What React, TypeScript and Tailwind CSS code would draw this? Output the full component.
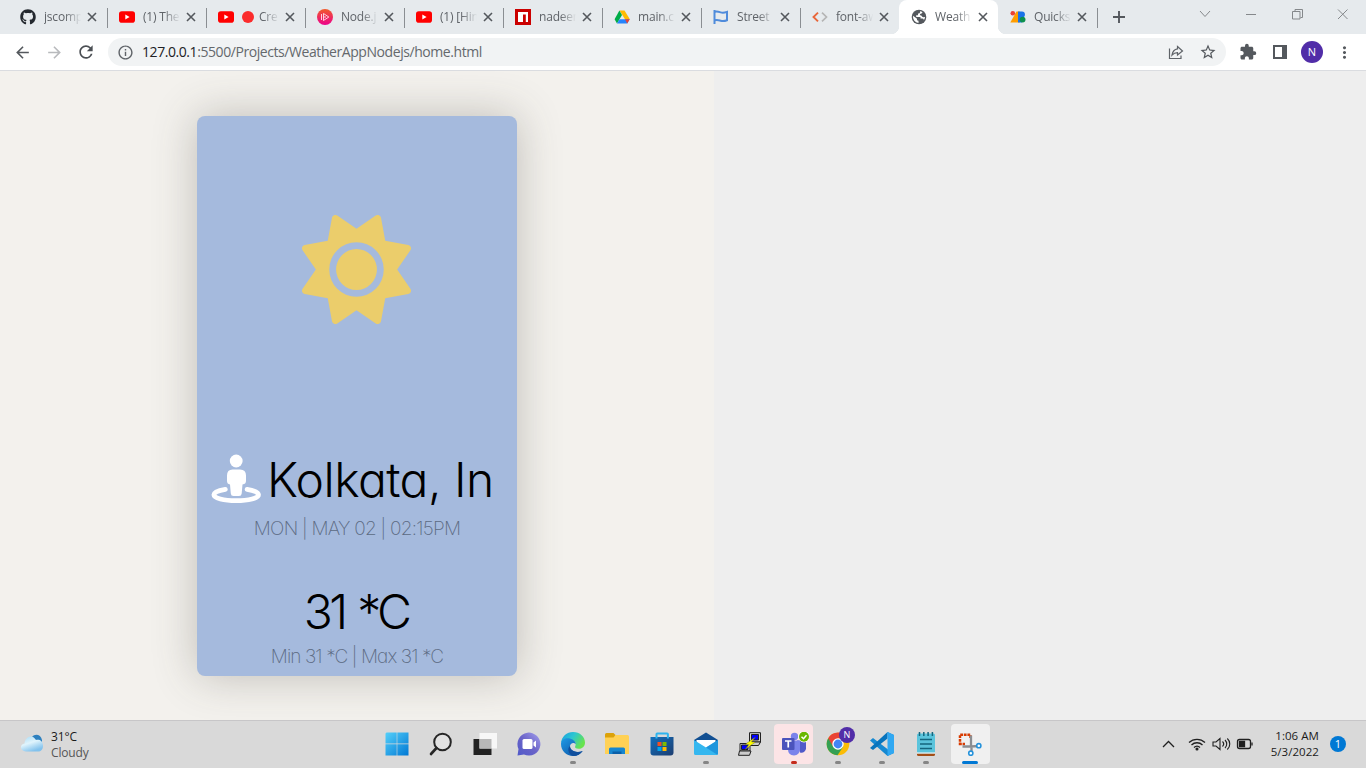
import type { ReactNode } from "react";
import { FaGithub, FaSun } from "react-icons/fa6";
import {
  MdArrowBack,
  MdArrowForward,
  MdRefresh,
  MdInfoOutline,
  MdExtension,
  MdStarBorder,
  MdMoreVert,
} from "react-icons/md";

const YouTube = () => (
  <svg viewBox="0 0 16 16" className="size-4">
    <rect y="2.3" width="16" height="11.4" rx="2.8" fill="#f00" />
    <path d="M6.3 5.6v4.8L10.6 8z" fill="#fff" />
  </svg>
);

const PlayBadge = () => (
  <svg viewBox="0 0 16 16" className="size-4">
    <defs>
      <linearGradient id="pb" x1="0" y1="0" x2="0" y2="1">
        <stop offset="0" stopColor="#f15b2a" />
        <stop offset="1" stopColor="#ec008c" />
      </linearGradient>
    </defs>
    <circle cx="8" cy="8" r="8" fill="url(#pb)" />
    <path d="M4.500 5v6M6.500 4.500v7L11.800 8zM6.500 8h2.500" fill="none" stroke="#ffe3ee" strokeWidth=".9" />
  </svg>
);

const Npm = () => (
  <svg viewBox="0 0 16 16" className="size-4">
    <rect width="16" height="16" fill="#cb0000" />
    <path d="M3 3h10v10h-2.2V5.4H8V13H3z" fill="#fff" />
  </svg>
);

const Drive = () => (
  <svg viewBox="0 0 16 16" className="size-4">
    <path d="M5.5 1.6h5L16 10.4h-4.9z" fill="#ffba00" />
    <path d="M5.4 1.6 8 6 3 14.4.6 10.2z" fill="#00ac47" />
    <path d="M5.6 10.2H15.6L13.2 14.4H3z" fill="#2684fc" />
    <path d="M11 10.2h4.7l-2.5 4.2z" fill="#ea4335" />
  </svg>
);

const Flag = () => (
  <svg viewBox="0 0 16 16" className="size-4">
    <path
      d="M1.500 1v14M2 2.800c2.400-.7 4 .1 5.700.6 2 .6 4 .3 6.300-.5v8.300c-2.300.9-4.200 1.100-6.300.5-1.800-.5-3.400-1.200-5.700-.5"
      fill="none"
      stroke="#4f8bdb"
      strokeWidth="2"
    />
  </svg>
);

const Brackets = () => (
  <svg viewBox="0 0 16 16" className="size-4">
    <path d="M6 3.600 1.500 8 6 12.400" fill="none" stroke="#e8663a" strokeWidth="1.900" />
    <path d="m10 3.600 4.500 4.400-4.500 4.400" fill="none" stroke="#b5b5b5" strokeWidth="1.700" />
  </svg>
);

const Globe = () => (
  <svg viewBox="0 0 16 16" className="size-4">
    <circle cx="8" cy="8" r="7.300" fill="#54585d" />
    <path d="M9 2.200c.3 1.500-.4 2.300-2 2.300v1.700H5.200v1.800h4.300v1.500h1.800c1.200 0 1.700.9 1.400 1.900A6 6 0 0 0 14 8c-1.500.3-2.600.2-3-.6-.5-1-1.400-.5-1.900-1.300-.4-.8.300-1.500 1.300-1.600.9-.1 1-.8.900-1.500A6 6 0 0 0 9 2.200z" fill="#fff" />
    <path d="M2.100 6.800 6 9.700v1.500l1.500.5v2.300A6 6 0 0 1 2.100 6.800z" fill="#fff" />
  </svg>
);

const GoogleFonts = () => (
  <svg viewBox="0 0 16 16" className="size-4">
    <path d="M6.500 2.500h3.200v11H.3z" fill="#ff9d00" />
    <path d="M8 2.500h4a2.900 2.900 0 0 1 0 5.900v5H8z" fill="#1a73e8" />
    <circle cx="2.800" cy="4.300" r="2.300" fill="#ea4335" />
    <circle cx="12.600" cy="10.600" r="2.900" fill="#0d904f" />
  </svg>
);

const Close = () => (
  <svg viewBox="0 0 14 14" className="ml-[3px] size-[14px] shrink-0">
    <path d="m3 3 8 8m0-8-8 8" stroke="#54585d" strokeWidth="1.600" />
  </svg>
);

const StreetView = () => (
  <svg viewBox="5 5 50 50" className="mt-[-3px] size-[50px] shrink-0" fill="#fff">
    <circle cx="30.200" cy="12" r="6.400" />
    <path d="M26.500 20.500h7.500q6 0 6 6v5.500q0 3-3.500 3.500l-.8 9q-.2 2.500-2.700 2.500h-5.500q-2.500 0-2.700-2.500l-.8-9Q21 35 21 32v-5.500q0-6 5.500-6z" />
    <path
      d="M19.300 40.300C12 41.400 7.900 43.400 7.900 45.800c0 3.400 9.800 5.900 22.300 5.900s22.300-2.500 22.300-5.900c0-2.400-4.100-4.400-11.400-5.500"
      fill="none"
      stroke="#fff"
      strokeWidth="4.800"
      strokeLinecap="round"
    />
  </svg>
);

type TabInfo = { icon: ReactNode; title: string; dot?: boolean; active?: boolean; last?: boolean };

const tabs: TabInfo[] = [
  { icon: <FaGithub className="size-4 text-[#24292f]" />, title: "jscomp" },
  { icon: <YouTube />, title: "(1) The" },
  { icon: <YouTube />, title: "Cre", dot: true },
  { icon: <PlayBadge />, title: "Node.j" },
  { icon: <YouTube />, title: "(1) [Hin" },
  { icon: <Npm />, title: "nadeer" },
  { icon: <Drive />, title: "main.c" },
  { icon: <Flag />, title: "Street" },
  { icon: <Brackets />, title: "font-aw", last: true },
  { icon: <Globe />, title: "Weath", active: true },
  { icon: <GoogleFonts />, title: "Quicks" },
];

function Tab({ icon, title, dot, active, last }: TabInfo) {
  return (
    <div
      className={
        "relative flex h-[34px] w-[99px] shrink-0 items-center pl-3 " + (active ? "rounded-t-lg bg-white" : "")
      }
    >
      {icon}
      <div className="ml-2 flex w-[38px] items-center whitespace-nowrap text-[12px] tracking-[-0.2px] text-[#5f6368] [mask-image:linear-gradient(90deg,#000_55%,transparent_98%)]">
        {dot && <span className="mr-[5px] size-3 shrink-0 rounded-full bg-[#fb2c2c]" />}
        {title}
      </div>
      <Close />
      {!active && !last && <span className="absolute -right-px top-2 h-5 w-px bg-[#8a8e92]" />}
      {active && (
        <>
          <span className="absolute -left-2 bottom-0 size-2 bg-[radial-gradient(circle_at_0_0,transparent_8px,white_8.5px)]" />
          <span className="absolute -right-2 bottom-0 size-2 bg-[radial-gradient(circle_at_100%_0,transparent_8px,white_8.5px)]" />
        </>
      )}
    </div>
  );
}

function Browser() {
  return (
    <header className="h-[71px] shrink-0">
      <div className="flex h-[34px] bg-[#e6eaed] pl-2">
        {tabs.map((t, i) => (
          <Tab key={i} {...t} />
        ))}
        <svg viewBox="0 0 18 18" className="ml-[13px] mt-2 size-[18px]">
          <path d="M9 3v12M3 9h12" stroke="#54585d" strokeWidth="1.900" />
        </svg>
        <svg viewBox="0 0 160 34" className="ml-auto mr-[14px] h-[34px] w-[160px]" fill="none" stroke="#85888b" strokeWidth="1">
          <path d="m8 11 5 5.500 5-5.500M54 14.500h10M100.500 11.500h7.500v7.500h-7.500zM103 11V9.500h7.500v8h-2M146 9.500l9.500 9.500m0-9.500-9.500 9.500" />
        </svg>
      </div>
      <div className="flex h-[37px] items-center border-b border-[#dadce0] bg-white pl-[13px]">
        <MdArrowBack className="size-[19px] text-[#54585d]" />
        <MdArrowForward className="ml-[13px] size-[19px] text-[#b8babd]" />
        <MdRefresh className="ml-3 size-5 text-[#4b4f54]" />
        <div className="ml-3 flex h-7 w-[1118px] items-center rounded-full bg-[#f1f3f4] pl-[9px] pr-[9px]">
          <MdInfoOutline className="size-[17px] text-[#5f6368]" />
          <span className="ml-2 mt-[-1px] text-[14px] tracking-[-0.43px] text-[#64686c]">
            <span className="text-[#202124]">127.0.0.1</span>:5500/Projects/WeatherAppNodejs/home.html
          </span>
          <svg viewBox="0 0 16 16" className="ml-auto size-4" fill="none" stroke="#5f6368" strokeWidth="1.200">
            <path d="M1.500 4.500v10h11.500v-3M9.500 2.500 14.500 7l-5 4V8.700c-2.300 0-3.800.6-5.500 2.400.5-3 2.200-5.700 5.500-6.200z" />
          </svg>
          <MdStarBorder className="ml-[15px] size-[18px] text-[#54585d]" />
        </div>
        <MdExtension className="ml-[13px] size-[18px] text-[#54585d]" />
        <svg viewBox="0 0 16 16" className="ml-[15px] size-4" fill="#54585d">
          <path fillRule="evenodd" d="M1 1h14v14H1zM3 3v10h7V3z" />
        </svg>
        <span className="ml-[13px] flex size-[22px] items-center justify-center rounded-full bg-[#512da8] text-[11px] text-white">N</span>
        <MdMoreVert className="ml-3 size-[19px] text-[#54585d]" />
      </div>
    </header>
  );
}

function WeatherCard() {
  return (
    <article className="flex h-[560px] w-80 flex-col items-center rounded-lg bg-[#a5badd] shadow-[0_0_44px_rgba(70,65,55,0.3)] [font-family:Inter,'Open_Sans',sans-serif] [font-feature-settings:'cv11']">
      <FaSun className="mb-px mr-px mt-[99px] size-[109px] text-[#ebcd6b]" />
      <div className="mt-[125px] flex h-[60px] w-full items-center pl-[14px]">
        <StreetView />
        <h1 className="ml-[6px] whitespace-nowrap text-[48px] font-[330] leading-[60px] tracking-[-0.55px] text-black">Kolkata, In</h1>
      </div>
      <p className="mt-[7px] whitespace-nowrap text-[19px] font-extralight leading-6 tracking-[-0.75px] text-[#5c6a82]">
        MON | MAY 02 | 02:15PM
      </p>
      <p className="mt-[41px] whitespace-nowrap pr-[2px] text-[48px] font-[330] leading-[60px] tracking-[-3.7px] text-black [word-spacing:3px]">31 *C</p>
      <p className="mt-[3px] whitespace-nowrap text-[19px] font-extralight leading-6 tracking-[-0.9px] text-[#5c6a82]">
        Min 31 *C | Max 31 *C
      </p>
    </article>
  );
}

const Icon = ({ children }: { children: ReactNode }) => (
  <svg viewBox="0 0 24 24" className="size-6">
    {children}
  </svg>
);

const apps: { icon: ReactNode; mark?: string; tile?: string }[] = [
  {
    icon: (
      <Icon>
        <defs>
          <linearGradient id="win" x1="0" y1="0" x2="1" y2="1">
            <stop stopColor="#55d0fa" />
            <stop offset="1" stopColor="#0078d4" />
          </linearGradient>
        </defs>
        <path fill="url(#win)" d="M1.500.5H11.700v11H.5v-10zM12.300.5h11.200v11H12.300zM.5 12.200H11.700v11.300H.5zM12.300 12.200h11.200v11.300H12.300z" />
      </Icon>
    ),
  },
  {
    icon: (
      <Icon>
        <circle cx="13.500" cy="10" r="8.300" fill="#e2e2e2" stroke="#262626" strokeWidth="2" />
        <path d="m7.500 16-5.500 6" stroke="#262626" strokeWidth="2.600" strokeLinecap="round" />
      </Icon>
    ),
  },
  {
    icon: (
      <Icon>
        <path d="M.5 7h18v16H.5z" fill="#222" />
        <path d="M6.500 1h18v15.500h-18z" fill="#f7f7f7" />
        <path d="M6.500 7h12v9.500h-12z" fill="#b8b8b8" />
      </Icon>
    ),
  },
  {
    icon: (
      <Icon>
        <defs>
          <linearGradient id="chat" x1="0" y1="1" x2="1" y2="0">
            <stop stopColor="#5059c9" />
            <stop offset=".5" stopColor="#6b64c8" />
            <stop offset="1" stopColor="#a5a1ee" />
          </linearGradient>
        </defs>
        <path d="M.5 23.500 1.500 17A11.500 11.500 0 1 1 7 22.500z" fill="url(#chat)" />
        <rect x="5.500" y="7" width="10" height="10" rx="1.500" fill="#fff" />
        <path d="m16.500 10.500 2.500-2v7l-2.500-2z" fill="#fff" />
      </Icon>
    ),
  },
  {
    icon: (
      <Icon>
        <defs>
          <linearGradient id="edgea" x1="0" y1="0" x2="1" y2=".5">
            <stop stopColor="#199ce0" />
            <stop offset=".5" stopColor="#2cc6d2" />
            <stop offset="1" stopColor="#67e34d" />
          </linearGradient>
          <linearGradient id="edgeb" x1="0" y1="0" x2="1" y2="1">
            <stop stopColor="#1f9be6" />
            <stop offset="1" stopColor="#0b4c9f" />
          </linearGradient>
        </defs>
        <path d="M0 11C.6 4.500 5.800 0 12 0c7 0 12 5 12 10.500 0 4-3 6.300-6.300 6.300-3 0-4.300-1.300-3.400-2.700 1.500-2.600-.8-5.900-4.300-6C5 8 1 9 0 11z" fill="url(#edgea)" />
        <path d="M0 12c0-4 3.500-6.300 7.500-5.700 4 .4 7.200 2.700 7.200 6-2-2.500-5.700-1-5.700 2.200 0 4.500 7 7 12.700 4.500C19.600 22 16 24 12 24 5.400 24 0 18.700 0 12z" fill="url(#edgeb)" />
        <path d="M9 14c0 5 7 7.500 12.700 5C19.600 22 16 24 12.500 24 8 23.300 5.500 17 9 14z" fill="#104f9d" />
      </Icon>
    ),
    mark: "w-1.5 bg-[#858585]",
  },
  {
    icon: (
      <Icon>
        <path d="M0 2.500A1.500 1.500 0 0 1 1.500 1h7l2 2v3H0z" fill="#dca20a" />
        <path d="M0 5.500h8.500l2-2.500H22.500q1.500 0 1.500 1.500v17.500H0z" fill="#ffd155" />
        <path d="M4 22v-5q0-1.500 1.500-1.500h13q1.500 0 1.500 1.500v5z" fill="#1686cf" />
        <path d="M7.500 19.500h9V22h-9z" fill="#0b5fa8" />
      </Icon>
    ),
  },
  {
    icon: (
      <Icon>
        <defs>
          <linearGradient id="store" x1="0" y1="0" x2="1" y2="1">
            <stop stopColor="#1270bd" />
            <stop offset="1" stopColor="#1d3d70" />
          </linearGradient>
        </defs>
        <path d="M.5 5h23v15.500q0 3-3 3h-17q-3 0-3-3z" fill="url(#store)" />
        <path d="M6.500 6.500V2.200q0-.7.7-.7h10q.7 0 .7.700v4.300" fill="none" stroke="#2fb4ee" strokeWidth="2" />
        <path d="M7.500 10h4v4h-4z" fill="#f25022" />
        <path d="M12.500 10h4v4h-4z" fill="#7fba00" />
        <path d="M7.500 15h4v4h-4z" fill="#00a4ef" />
        <path d="M12.500 15h4v4h-4z" fill="#ffb900" />
      </Icon>
    ),
  },
  {
    icon: (
      <Icon>
        <path d="M0 8 12 .5 24 8v6H0z" fill="#114f92" />
        <path d="M2.500 8h19v5L12 17l-9.500-4z" fill="#fff" />
        <path d="M0 8v13.500q0 1.500 1.500 1.500h21q1.500 0 1.500-1.500V8L12 15.500z" fill="#35b7ef" />
        <path d="M12 15.500 24 8v13.500q0 1-.7 1.300z" fill="#1587d6" opacity=".7" />
      </Icon>
    ),
    mark: "w-1.5 bg-[#858585]",
  },
  {
    icon: (
      <Icon>
        <g stroke="#222" strokeWidth="1">
          <path d="M11.500.7h11v9.300h-11z" fill="#d4d4d4" />
          <path d="M13.500 2.500h7V8h-7z" fill="#00f" />
          <path d="M11.500 10h11l-2 3.500h-9z" fill="#ccc" />
          <path d="M2 11.500h10V19H2z" fill="#d4d4d4" />
          <path d="M3.500 13H10v4.500H3.500z" fill="#00f" />
          <path d="M1.500 19h11.500l-1.500 4.300H.5z" fill="#ccc" />
        </g>
        <path d="M17.500 5 7 12.500h4L7 17.500l10.500-7.500h-4z" fill="#ff0" stroke="#553" strokeWidth=".4" />
      </Icon>
    ),
  },
  {
    icon: (
      <svg viewBox="0 0 30 24" className="h-6 w-[30px]">
        <circle cx="15.500" cy="4.500" r="3.700" fill="#7b83eb" />
        <circle cx="23" cy="6.500" r="3" fill="#5059c9" />
        <path d="M18 8.500h9v8.500q-1.500 4.500-6 3.500z" fill="#5059c9" />
        <path d="M9 8.500h12v9q-.5 5.500-6 6-6-.5-6-6z" fill="#7b83eb" />
        <rect x="3" y="6" width="12.500" height="12" rx="1" fill="#4b53bc" />
        <path d="M6 9h6.500M9.250 9v6.500" stroke="#fff" strokeWidth="1.700" />
        <circle cx="25" cy="4.700" r="5.800" fill="#fff" />
        <circle cx="25" cy="4.700" r="5" fill="#6bb700" />
        <path d="m22.500 4.700 2 2 3-3.500" stroke="#fff" strokeWidth="1.500" fill="none" />
      </svg>
    ),
    mark: "w-1.5 bg-[#c42b1c]",
    tile: "bg-[#fce4e6]",
  },
  {
    icon: (
      <div className="relative">
        <Icon>
          <circle cx="12" cy="12" r="11.300" fill="#fbbc05" />
          <path d="M12 12 2.200 6.300A11.300 11.300 0 0 0 11.500 23.300L17 15z" fill="#34a053" />
          <path d="M12 6.500h10L21.800 6A11.300 11.300 0 0 0 2.200 6.300L7 14.500z" fill="#ea4335" />
          <circle cx="12" cy="12" r="5.700" fill="#fff" />
          <circle cx="12" cy="12" r="4.400" fill="#4285f4" />
        </Icon>
        <span className="absolute -right-[5px] -top-[5px] flex size-4 items-center justify-center rounded-full bg-[#512da8] text-[9px] text-white">N</span>
      </div>
    ),
    mark: "w-1.5 bg-[#858585]",
  },
  {
    icon: (
      <Icon>
        <path d="M17.500 0 24 3v18l-6.500 3L0 8.500 3 6l15 11.500V6.500z" fill="#1689d2" />
        <path d="M0 16 17.500 0v6.500L3 18z" fill="#0874bd" />
        <path d="M17.500 0 24 3v18l-6.500 3z" fill="#30a8f2" />
      </Icon>
    ),
    mark: "w-1.5 bg-[#858585]",
  },
  {
    icon: (
      <Icon>
        <rect x="3" y="1.500" width="18" height="20" rx="1.500" fill="#5bc4dc" />
        <path d="M3 21.500h18v1q0 1.500-1.500 1.500h-15Q3 24 3 22.500z" fill="#a34f18" />
        <path d="M3 20.500h18v1H3z" fill="#fff" />
        <path d="M5.500 0v4m4.300-4v4m4.300-4v4m4.300-4v4M6 7.500h12M6 12h12M6 16.500h12" stroke="#15667e" strokeWidth="1.500" />
      </Icon>
    ),
    mark: "w-1.5 bg-[#858585]",
  },
  {
    icon: (
      <Icon>
        <path d="M2 13.300V2.700h10.500V6M1 12h6" fill="none" stroke="#d83b01" strokeWidth="2.500" strokeDasharray="2.800 .8" />
        <path d="M13 3.500v11l8-.5M4.500 14.500H13.500v5" fill="none" stroke="#8b8d91" strokeWidth="2.300" />
        <circle cx="20.800" cy="13.700" r="2.100" fill="#fff" stroke="#2492db" strokeWidth="1.600" />
        <circle cx="12.800" cy="21.200" r="2.100" fill="#fff" stroke="#2492db" strokeWidth="1.600" />
      </Icon>
    ),
    mark: "w-4 bg-[#0078d4]",
    tile: "bg-[#f0f0f0]",
  },
];

function Taskbar() {
  return (
    <footer className="flex h-12 shrink-0 items-center border-t border-[#c7c6c8] bg-[#d9d9d9] pb-px">
      <div className="flex w-[375px] shrink-0 items-center pl-5">
        <svg viewBox="0 0 24 20" className="mt-[-2px] h-5 w-6">
          <defs>
            <linearGradient id="cloud" x1="0" y1="0" x2=".5" y2="1">
              <stop stopColor="#a5daf6" />
              <stop offset=".5" stopColor="#e0f4fc" />
              <stop offset="1" stopColor="#82c2ed" />
            </linearGradient>
          </defs>
          <path d="M12 4c3-4 9-2.500 10 3v5h-8z" fill="#2d80bf" />
          <path d="M6 18.500C-.5 18.500-.5 11 4.500 10.500 5 4 12 .5 16 7c3-1 7 .5 7 5.500 0 4-2 6-5 6z" fill="url(#cloud)" />
        </svg>
        <div className="ml-[7px] mt-[2px] text-[12px] leading-4 tracking-[-0.15px] text-[#1b1b1b]">
          <div>31°C</div>
          <div className="text-[#555]">Cloudy</div>
        </div>
      </div>
      <nav className="flex shrink-0">
        {apps.map((a, i) => (
          <div key={i} className="flex w-[44.080px] justify-center">
            <div className={"relative flex h-10 items-center justify-center rounded " + (a.tile ? "w-[39px] " + a.tile : "w-10")}>
              {a.icon}
              {a.mark && (
                <span className="absolute inset-x-0 bottom-0 flex justify-center">
                  <span className={"h-[3px] rounded-full " + a.mark} />
                </span>
              )}
            </div>
          </div>
        ))}
      </nav>
      <div className="ml-auto flex items-center pr-5">
        <svg viewBox="0 0 92 20" className="h-5 w-[92px] overflow-visible" fill="none" stroke="#202020" strokeWidth="1.300">
          <path d="m3 13 5.500-5.500 5.500 5.500" />
          <path d="M29 8.500c4.500-4.300 11.500-4.300 16 0M31.500 11c3-3 8-3 11 0M34 13.500c1.700-1.600 4.300-1.600 6 0" />
          <circle cx="37" cy="15" r=".9" fill="#202020" />
          <path d="M53 8h3l4-3.500v11L56 12h-3zM62.500 7.500c1.500 1.500 1.500 3.500 0 5M65 6c2.300 2.300 2.300 6 0 8M67.300 4.500c3.300 3 3.300 8 0 11" strokeWidth="1.100" />
          <rect x="77.500" y="5.500" width="13" height="9" rx="2" />
          <path d="M79.500 7.500h5v5h-5z" fill="#202020" />
          <path d="M92 8.500v3" />
        </svg>
        <div className="ml-3 w-[55px] whitespace-nowrap text-right text-[11.500px] leading-4 tracking-[0.05px] text-[#1b1b1b]">
          <div>1:06 AM</div>
          <div>5/3/2022</div>
        </div>
        <span className="ml-[11px] flex size-4 items-center justify-center rounded-full bg-[#0078d4] text-[11px] text-white">1</span>
      </div>
    </footer>
  );
}

export default function App() {
  return (
    <div className="flex h-[768px] w-[1366px] flex-col overflow-hidden [font-family:'Open_Sans','Noto_Sans',sans-serif]">
      <Browser />
      <main className="flex min-h-0 flex-1">
        <section className="flex w-[714px] justify-center overflow-hidden bg-[#f3f1ed] pt-[45px]">
          <WeatherCard />
        </section>
        <section className="flex-1 bg-[#eeeeee]" />
      </main>
      <Taskbar />
    </div>
  );
}
